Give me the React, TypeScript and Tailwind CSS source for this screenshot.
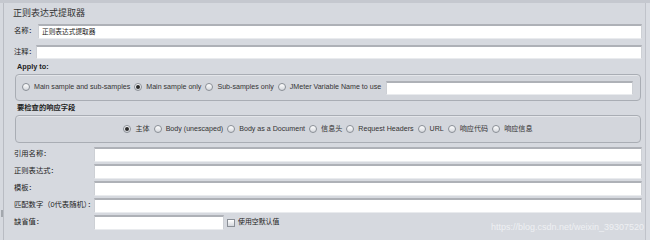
const font = "font-['Liberation_Sans','Noto_Sans_CJK_SC',sans-serif]";

function Radio({ label, checked }: { label: string; checked?: boolean }) {
    return (
        <label className="flex items-center gap-[4px] whitespace-nowrap">
            <span className="w-[8px] h-[8px] shrink-0 rounded-full border border-[#8a8f96] bg-linear-to-b from-[#ffffff] to-[#d5d8dd] flex items-center justify-center">
                {checked && <span className="w-[4px] h-[4px] rounded-full bg-[#2b2b2b]" />}
            </span>
            <span>{label}</span>
        </label>
    );
}

function Field({ className = "", value = "" }: { className?: string; value?: string }) {
    return (
        <div
            className={`bg-white border-t-2 border-t-[#aeb1b7] border-x border-x-[#cdd0d5] border-b border-b-[#e9ebee] flex items-center pl-[3px] text-[6.7px] text-[#222] ${className}`}
        >
            {value}
        </div>
    );
}

const rows = ["引用名称：", "正则表达式：", "模板：", "匹配数字（0代表随机）："];

export default function App() {
    return (
        <div className={`w-[650px] h-[240px] bg-[#d6d9df] border-t-[3px] border-[#c5c8cf] flex relative overflow-hidden text-[#222] ${font}`}>
            <div className="w-[4px] border-r border-[#b9bcc3] flex flex-col pt-[207px]">
                <div className="w-[2px] h-[7px] bg-[#a3a7ad] ml-[1px]"></div>
            </div>

            <div className="flex-1 flex flex-col pl-[9px] pr-[3px] border-r border-[#c0c3ca]">
                <h1 className="h-[20px] leading-[20px] text-[9px] text-[#333]">正则表达式提取器</h1>

                <div className="flex items-center mt-[1px] h-[15px] text-[7.3px]">
                    <span className="w-[25px] shrink-0 pl-[1px]">名称：</span>
                    <Field className="flex-1 h-[15px]" value="正则表达式提取器" />
                </div>
                <div className="flex items-center mt-[6px] h-[14px] text-[7.3px]">
                    <span className="w-[23px] shrink-0 pl-[1px]">注释：</span>
                    <Field className="flex-1 h-[14px]" />
                </div>

                <div className="h-[14px] leading-[14px] mt-[1px] pl-[4px] text-[7.3px] font-bold">Apply to:</div>
                <div className="ml-[2px] mr-[1px] h-[27px] rounded-[4px] border border-[#a9adb4] bg-[#d3d6dc] shadow-[inset_0_1px_0_#e4e6ea] flex items-center pl-[6px] pr-[7px] gap-[4px] text-[7.1px] text-[#333]">
                    <Radio label="Main sample and sub-samples" />
                    <Radio label="Main sample only" checked />
                    <Radio label="Sub-samples only" />
                    <Radio label="JMeter Variable Name to use" />
                    <Field className="flex-1 h-[14px] ml-[1px]" />
                </div>

                <div className="h-[14px] leading-[14px] pl-[4px] text-[7.3px] font-bold">要检查的响应字段</div>
                <div className="ml-[2px] mr-[1px] h-[28px] rounded-[4px] border border-[#a9adb4] bg-[#d3d6dc] shadow-[inset_0_1px_0_#e4e6ea] flex items-center justify-center gap-[4px] text-[7.1px] text-[#333]">
                    <Radio label="主体" checked />
                    <Radio label="Body (unescaped)" />
                    <Radio label="Body as a Document" />
                    <Radio label="信息头" />
                    <Radio label="Request Headers" />
                    <Radio label="URL" />
                    <Radio label="响应代码" />
                    <Radio label="响应信息" />
                </div>

                <div className="mt-[4px] flex flex-col gap-[2px] text-[7.3px]">
                    {rows.map((r) => (
                        <div key={r} className="flex items-center h-[15px]">
                            <span className="w-[81px] shrink-0 pl-[1px] whitespace-nowrap">{r}</span>
                            <Field className="flex-1 h-[15px]" />
                        </div>
                    ))}
                    <div className="flex items-center h-[15px]">
                        <span className="w-[81px] shrink-0 pl-[1px]">缺省值：</span>
                        <Field className="w-[130px] h-[15px]" />
                        <span className="ml-[3px] w-[8px] h-[8px] border border-[#8a8f96] bg-linear-to-b from-[#ffffff] to-[#d5d8dd]"></span>
                        <span className="ml-[3px] text-[6.9px]">使用空默认值</span>
                    </div>
                </div>
            </div>
            <div className="w-[4px] bg-[#d9dce2]"></div>

            <div className="absolute right-[6px] bottom-[6px] text-[9px] text-[#eef0f3]">https://blog.csdn.net/weixin_39307520</div>
        </div>
    );
}
